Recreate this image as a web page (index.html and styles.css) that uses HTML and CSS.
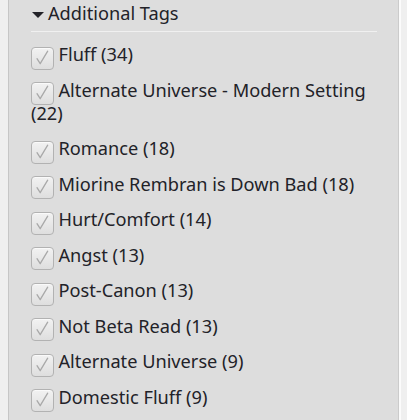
FILE: index.html
```html
<!DOCTYPE html>
<html lang="en">
<head>
<meta charset="utf-8">
<title>Additional Tags</title>
<link rel="stylesheet" href="styles.css">
</head>
<body>
<div class="page">
  <aside class="panel">
    <h3 class="heading">
      <span class="toggle"></span>Additional Tags
    </h3>
    <ul class="tags">
      <li><label><span class="box"><svg viewBox="0 0 23 23" width="23" height="23"><polyline points="6,11.7 9.2,16.7 16.7,4.2"/></svg></span>Fluff (34)</label></li>
      <li><label><span class="box"><svg viewBox="0 0 23 23" width="23" height="23"><polyline points="6,11.7 9.2,16.7 16.7,4.2"/></svg></span>Alternate Universe - Modern Setting (22)</label></li>
      <li><label><span class="box"><svg viewBox="0 0 23 23" width="23" height="23"><polyline points="6,11.7 9.2,16.7 16.7,4.2"/></svg></span>Romance (18)</label></li>
      <li><label><span class="box"><svg viewBox="0 0 23 23" width="23" height="23"><polyline points="6,11.7 9.2,16.7 16.7,4.2"/></svg></span>Miorine Rembran is Down Bad (18)</label></li>
      <li><label><span class="box"><svg viewBox="0 0 23 23" width="23" height="23"><polyline points="6,11.7 9.2,16.7 16.7,4.2"/></svg></span>Hurt/Comfort (14)</label></li>
      <li><label><span class="box"><svg viewBox="0 0 23 23" width="23" height="23"><polyline points="6,11.7 9.2,16.7 16.7,4.2"/></svg></span>Angst (13)</label></li>
      <li><label><span class="box"><svg viewBox="0 0 23 23" width="23" height="23"><polyline points="6,11.7 9.2,16.7 16.7,4.2"/></svg></span>Post-Canon (13)</label></li>
      <li><label><span class="box"><svg viewBox="0 0 23 23" width="23" height="23"><polyline points="6,11.7 9.2,16.7 16.7,4.2"/></svg></span>Not Beta Read (13)</label></li>
      <li><label><span class="box"><svg viewBox="0 0 23 23" width="23" height="23"><polyline points="6,11.7 9.2,16.7 16.7,4.2"/></svg></span>Alternate Universe (9)</label></li>
      <li><label><span class="box"><svg viewBox="0 0 23 23" width="23" height="23"><polyline points="6,11.7 9.2,16.7 16.7,4.2"/></svg></span>Domestic Fluff (9)</label></li>
    </ul>
  </aside>
</div>
</body>
</html>
```

FILE: styles.css
```css
html, body {
  margin: 0;
  padding: 0;
  height: 100%;
  overflow: hidden;
}

body {
  background: #efefef;
  font-family: "Noto Sans", "DejaVu Sans", sans-serif;
  font-size: 18.2px;
  line-height: 23px;
  color: #222228;
}

.page {
  display: flex;
  height: 100%;
  padding-left: 8px;
}

.panel {
  height: 100%;
  box-sizing: content-box;
  padding: 0 21px 0 22px;
  width: 346px;
  background: #dddddd;
  border-left: 1px solid #c6c6c6;
  border-right: 1px solid #cbcbcb;
  box-shadow: 2px 0 0 #fbfbfb;
}

.heading {
  margin: 0;
  padding: 2px 0 6px 0;
  font-size: 18.2px;
  font-weight: normal;
  line-height: 23px;
  border-bottom: 1px solid #f0f0f0;
  display: flex;
  align-items: center;
}

.toggle {
  width: 0;
  height: 0;
  margin: 3px 4px 0 1px;
  border-left: 6px solid transparent;
  border-right: 6px solid transparent;
  border-top: 6px solid #222228;
}

.tags {
  list-style: none;
  margin: 0;
  padding: 11px 0 0 0;
}

.tags li {
  margin-bottom: 12.5px;
}

.box {
  display: inline-block;
  box-sizing: border-box;
  width: 23px;
  height: 23px;
  margin: -4px 4.5px -4px 0;
  vertical-align: -4.5px;
  border: 1px solid #b2b2b2;
  border-radius: 4px;
  background: linear-gradient(#f2f2f2, #dedede);
  box-shadow: inset 0 1px 0 #fafafa;
}

.box svg {
  display: block;
  margin: -1px;
  fill: none;
  stroke: #a9a9a9;
  stroke-width: 1.3;
  stroke-linecap: round;
  stroke-linejoin: round;
}
```
